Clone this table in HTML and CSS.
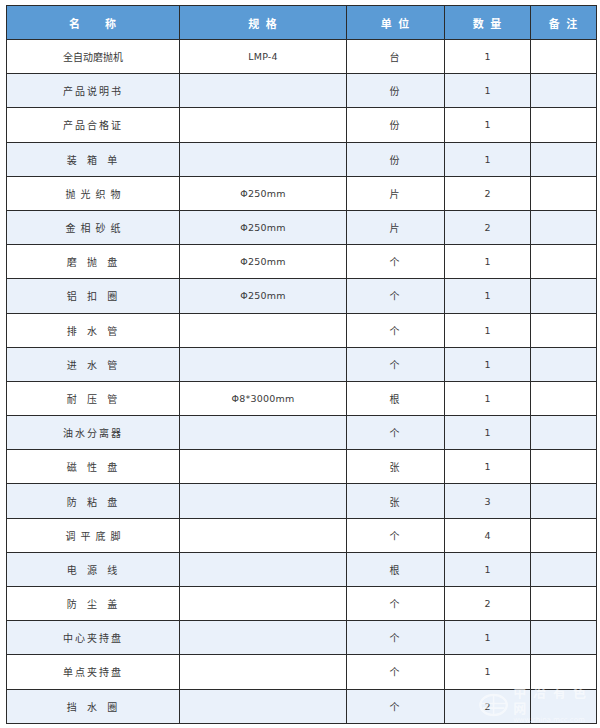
FILE: index.html
```html
<!DOCTYPE html>
<html lang="zh">
<head>
<meta charset="utf-8">
<title>装箱清单</title>
<link rel="stylesheet" href="styles.css">
</head>
<body>
<div class="wrap">
<table class="list">
  <colgroup>
    <col class="c1"><col class="c2"><col class="c3"><col class="c4"><col class="c5">
  </colgroup>
  <thead>
    <tr><th>名　　称</th><th>规 格</th><th>单 位</th><th>数 量</th><th>备 注</th></tr>
  </thead>
  <tbody>
    <tr><td class="cn tight">全自动磨抛机</td><td class="lat">LMP-4</td><td class="cn">台</td><td class="lat">1</td><td></td></tr>
    <tr><td class="cn">产品说明书</td><td></td><td class="cn">份</td><td class="lat">1</td><td></td></tr>
    <tr><td class="cn">产品合格证</td><td></td><td class="cn">份</td><td class="lat">1</td><td></td></tr>
    <tr><td class="cn">装 箱 单</td><td></td><td class="cn">份</td><td class="lat">1</td><td></td></tr>
    <tr><td class="cn wide">抛光织物</td><td class="lat">Φ250mm</td><td class="cn">片</td><td class="lat">2</td><td></td></tr>
    <tr><td class="cn wide">金相砂纸</td><td class="lat">Φ250mm</td><td class="cn">片</td><td class="lat">2</td><td></td></tr>
    <tr><td class="cn">磨 抛 盘</td><td class="lat">Φ250mm</td><td class="cn">个</td><td class="lat">1</td><td></td></tr>
    <tr><td class="cn">铝 扣 圈</td><td class="lat">Φ250mm</td><td class="cn">个</td><td class="lat">1</td><td></td></tr>
    <tr><td class="cn">排 水 管</td><td></td><td class="cn">个</td><td class="lat">1</td><td></td></tr>
    <tr><td class="cn">进 水 管</td><td></td><td class="cn">个</td><td class="lat">1</td><td></td></tr>
    <tr><td class="cn">耐 压 管</td><td class="lat">Φ8*3000mm</td><td class="cn">根</td><td class="lat">1</td><td></td></tr>
    <tr><td class="cn">油水分离器</td><td></td><td class="cn">个</td><td class="lat">1</td><td></td></tr>
    <tr><td class="cn">磁 性 盘</td><td></td><td class="cn">张</td><td class="lat">1</td><td></td></tr>
    <tr><td class="cn">防 粘 盘</td><td></td><td class="cn">张</td><td class="lat">3</td><td></td></tr>
    <tr><td class="cn wide">调平底脚</td><td></td><td class="cn">个</td><td class="lat">4</td><td></td></tr>
    <tr><td class="cn">电 源 线</td><td></td><td class="cn">根</td><td class="lat">1</td><td></td></tr>
    <tr><td class="cn">防 尘 盖</td><td></td><td class="cn">个</td><td class="lat">2</td><td></td></tr>
    <tr><td class="cn">中心夹持盘</td><td></td><td class="cn">个</td><td class="lat">1</td><td></td></tr>
    <tr><td class="cn">单点夹持盘</td><td></td><td class="cn">个</td><td class="lat">1</td><td></td></tr>
    <tr><td class="cn">挡 水 圈</td><td></td><td class="cn">个</td><td class="lat">2</td><td></td></tr>
  </tbody>
</table>
<div class="watermark">
  <svg class="wm-logo" viewBox="0 0 40 30" width="34" height="26" aria-hidden="true">
    <ellipse cx="20" cy="15" rx="17" ry="13" fill="none" stroke="#fff" stroke-width="3"/>
    <path d="M4 13 H36 M6 19 H34 M20 2 V28" stroke="#fff" stroke-width="2" fill="none"/>
  </svg>
  <div class="wm-text">
    <div class="wm-name">中 冶 有 色 网</div>
    <div class="wm-url">www.china.mcc.com</div>
  </div>
</div>
</div>
</body>
</html>
```

FILE: styles.css
```css
html, body {
  margin: 0;
  padding: 0;
  background: #fff;
}

.wrap {
  position: relative;
  padding: 5px 0 0 6px;
}

.list {
  border-collapse: collapse;
  table-layout: fixed;
  width: 590px;
  font-family: "Noto Sans CJK SC", "DejaVu Sans", sans-serif;
  font-size: 10px;
  color: #3a3a3a;
  border: 1px solid #2b2b2b;
}

.c1 { width: 173px; }
.c2 { width: 167px; }
.c3 { width: 98px; }
.c4 { width: 86px; }
.c5 { width: 66px; }

.list th,
.list td {
  border: 1px solid #2b2b2b;
  text-align: center;
  vertical-align: middle;
  padding: 0;
}

.list th {
  height: 33px;
  background: #5b9bd5;
  color: #fff;
  font-weight: bold;
  font-size: 11px;
  letter-spacing: 1px;
  word-spacing: 2px;
}

.list td {
  height: 33.2px;
}

.list tbody tr:nth-child(even) td {
  background: #eaf1fa;
}

.cn {
  letter-spacing: 2px;
  word-spacing: 4px;
}

.cn.tight {
  letter-spacing: 0;
}

.cn.wide {
  letter-spacing: 5px;
  text-indent: 5px;
}

.lat {
  font-family: "DejaVu Sans", sans-serif;
  font-size: 9.5px;
  letter-spacing: 0.2px;
}

.watermark {
  position: absolute;
  left: 478px;
  top: 684px;
  display: flex;
  align-items: center;
  gap: 4px;
  opacity: 0.55;
  pointer-events: none;
}

.wm-text {
  display: flex;
  flex-direction: column;
  color: #fff;
  font-family: "Noto Sans CJK SC", sans-serif;
}

.wm-name {
  font-size: 13px;
  font-weight: bold;
  letter-spacing: 2px;
  line-height: 16px;
}

.wm-url {
  font-family: "DejaVu Sans", sans-serif;
  font-size: 7px;
  line-height: 9px;
}
```
